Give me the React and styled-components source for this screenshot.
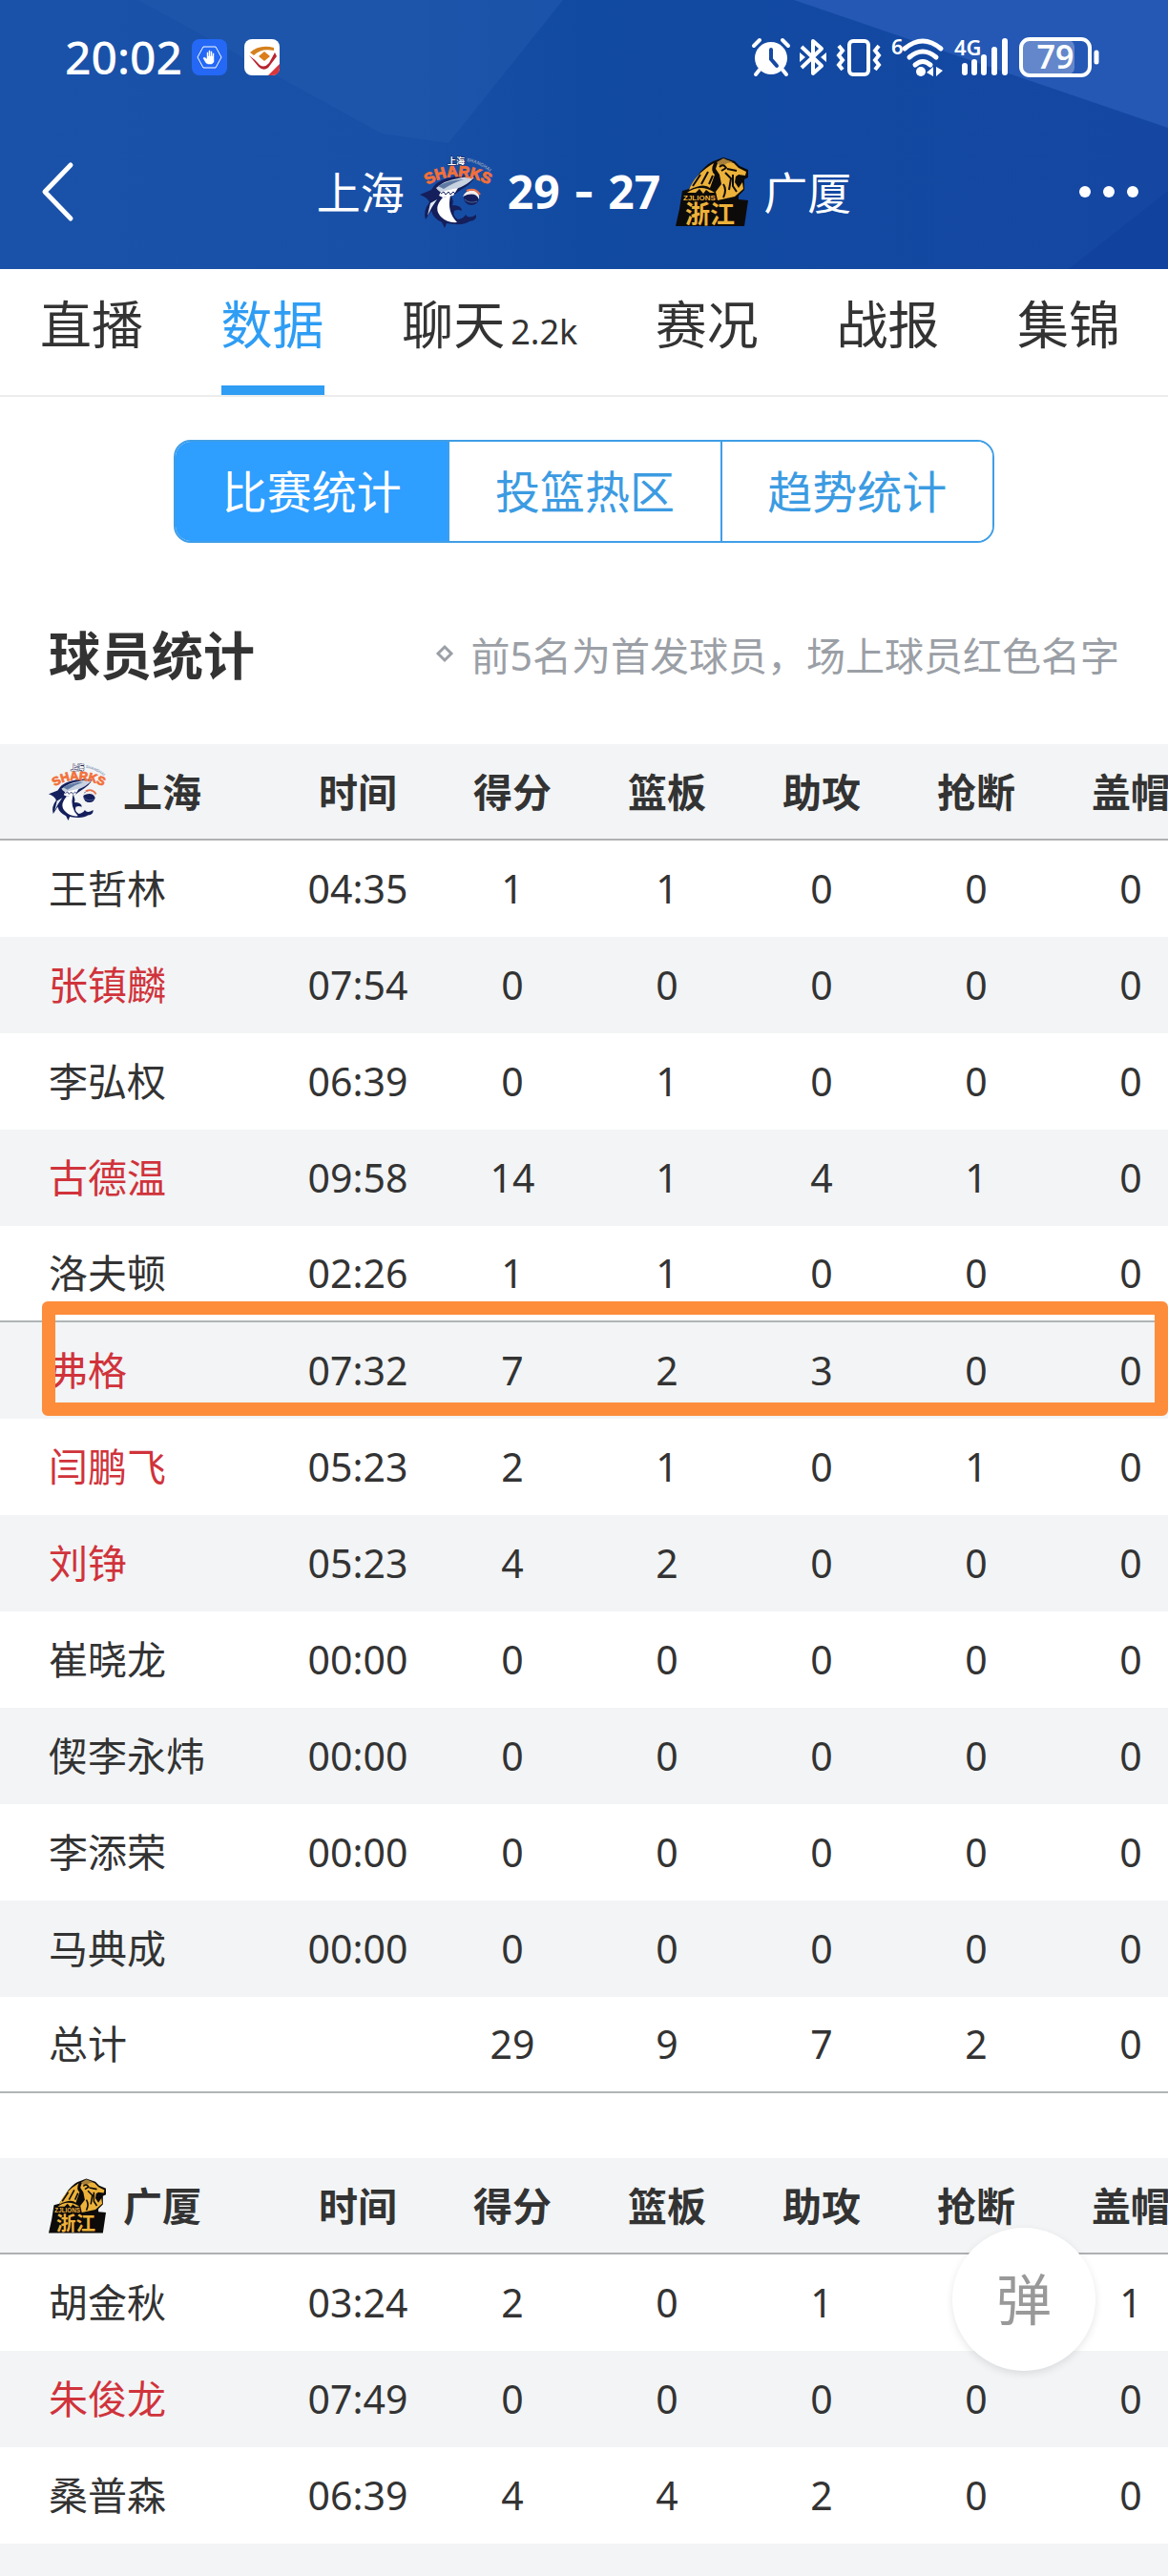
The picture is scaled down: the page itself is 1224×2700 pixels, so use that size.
import React, { useState } from "react";
import styled, { createGlobalStyle } from "styled-components";

const tabs = [
  { name: "直播" },
  { name: "数据" },
  { name: "聊天", count: "2.2k" },
  { name: "赛况" },
  { name: "战报" },
  { name: "集锦" },
];

const segments = ["比赛统计", "投篮热区", "趋势统计"];

const columns = ["时间", "得分", "篮板", "助攻", "抢断", "盖帽"];

const shanghai = [
  { name: "王哲林", stats: ["04:35", 1, 1, 0, 0, 0] },
  { name: "张镇麟", onCourt: true, stats: ["07:54", 0, 0, 0, 0, 0] },
  { name: "李弘权", stats: ["06:39", 0, 1, 0, 0, 0] },
  { name: "古德温", onCourt: true, stats: ["09:58", 14, 1, 4, 1, 0] },
  { name: "洛夫顿", lined: true, stats: ["02:26", 1, 1, 0, 0, 0] },
  { name: "弗格", onCourt: true, marked: true, stats: ["07:32", 7, 2, 3, 0, 0] },
  { name: "闫鹏飞", onCourt: true, stats: ["05:23", 2, 1, 0, 1, 0] },
  { name: "刘铮", onCourt: true, stats: ["05:23", 4, 2, 0, 0, 0] },
  { name: "崔晓龙", stats: ["00:00", 0, 0, 0, 0, 0] },
  { name: "偰李永炜", stats: ["00:00", 0, 0, 0, 0, 0] },
  { name: "李添荣", stats: ["00:00", 0, 0, 0, 0, 0] },
  { name: "马典成", stats: ["00:00", 0, 0, 0, 0, 0] },
  { name: "总计", lined: true, stats: ["", 29, 9, 7, 2, 0] },
];

const guangsha = [
  { name: "胡金秋", stats: ["03:24", 2, 0, 1, "", 1] },
  { name: "朱俊龙", onCourt: true, stats: ["07:49", 0, 0, 0, 0, 0] },
  { name: "桑普森", stats: ["06:39", 4, 4, 2, 0, 0] },
  { name: "", stats: ["", "", "", "", "", ""] },
];

const SharksLogo = ({ size }) => (
  <svg width={size} height={size} viewBox="0 0 76 76" role="img" aria-label="上海">
    <path id="sharksArc" d="M8 31 Q36 13 74 31" fill="none" />
    <path id="sharksTop" d="M49 6 Q62 8 73 17" fill="none" />
    <path
      d="M0 41 L12 36 Q17 27 28 24 Q44 19 58 22 Q54 30 43 36 L33 43 Q36 48 34 52 Q44 52 44 58 Q40 56 36 58 Q34 64 40 67 Q46 66 48 62 Q51 67 59 62 Q60 68 52 69 Q46 74 28 71 L26 76 L23 70 Q14 66 12 58 L6 67 Q3 58 10 49 Q8 44 0 41Z"
      fill="#141f5c"
    />
    <path
      d="M17 34 Q26 26 40 24 Q50 21 57 23 Q50 31 38 35 L27 39 Q21 40 17 34Z"
      fill="#c8d2e0"
    />
    <path d="M19 32 Q32 25 46 25 Q36 28 25 35Z" fill="#5f7aa3" />
    <path d="M22 38 L40 34 L35 42 L24 44 L20 42Z" fill="#fff" />
    <path
      d="M22 40 l3 -2 l2 3 l3 -3 l2 3 l3 -3 l2 2"
      fill="none"
      stroke="#141f5c"
      strokeWidth="1"
    />
    <path d="M24 44 Q13 56 23 65 Q29 71 39 70 Q28 59 32 42Z" fill="#fff" />
    <path d="M11 50 L18 46 Q12 54 8 63Z" fill="#e4eaf3" />
    <circle cx="54" cy="44" r="8" fill="#141f5c" />
    <path d="M45 43 Q49 35 58 37 Q63 40 62 46 Q58 37 45 43Z" fill="#f3efee" />
    <path d="M49 37 Q58 33 63 41" fill="none" stroke="#ee7047" strokeWidth="2" />
    <path d="M47 46 Q52 51 60 48" fill="none" stroke="#4d6297" strokeWidth="1" />
    <g fontFamily="'Liberation Sans', sans-serif" fontWeight="bold">
      <text fontSize="16" fill="#f2703a" stroke="#f2703a" strokeWidth="1">
        <textPath href="#sharksArc">SHARKS</textPath>
      </text>
      <text fontSize="5" fill="#8f9dbb">
        <textPath href="#sharksTop">SHANGHAI</textPath>
      </text>
    </g>
    <text
      x="29"
      y="9"
      fontSize="9"
      fontWeight="bold"
      fill="#fff"
      stroke="#1a2350"
      strokeWidth="1"
      paintOrder="stroke"
      fontFamily="'Noto Sans CJK SC', sans-serif"
    >
      上海
    </text>
  </svg>
);

const LionsLogo = ({ size }) => (
  <svg width={size} height={size} viewBox="0 0 76 76" role="img" aria-label="广厦">
    <path
      d="M26 17 Q36 6 42 5 L50 2 L62 6 L67 11 L76 15 L76 23 L72 25 L72 36 L66 42 L66 46 L76 47 L72 74 L0 74 L4 56 L7 37 L14 35Z"
      fill="#0d0b0a"
    />
    <path d="M14 36 Q20 20 40 8 Q36 16 41 20 L36 34 Q30 28 14 36Z" fill="#edb23a" />
    <path
      d="M44 8 L50 4 L61 8 L66 13 L74 17 L73 21 L66 20 L63 22 L62 28 L66 34 L70 28 L71 35 L62 43 L44 47 L42 38 L48 30 L46 20 L42 14Z"
      fill="#edb23a"
    />
    <path d="M43 7 L50 3 L60 7 L54 8 L48 12Z" fill="#a8803a" />
    <path
      d="M46 12 Q50 8 53 13 L48 16 M54 14 L64 16 M52 18 L58 24 L56 36 M50 30 Q54 36 50 44 M60 20 L60 32 L64 38 M18 32 L26 20 M27 30 L34 17 M35 30 L39 21"
      fill="none"
      stroke="#0d0b0a"
      strokeWidth="2"
    />
    <path
      d="M12 39 Q26 29 41 39 L36 39 L32 36 L29 40 L25 35 L21 39Z"
      fill="#edb23a"
    />
    <g fill="#edb23a" fontWeight="bold">
      <text x="8" y="47" fontSize="8" fontFamily="'Liberation Sans', sans-serif">
        ZJLIONS
      </text>
      <text x="10" y="71" fontSize="26" fontFamily="'Noto Sans CJK SC', sans-serif">
        浙江
      </text>
    </g>
  </svg>
);

const HeaderArt = () => (
  <Backdrop viewBox="0 0 1224 282" preserveAspectRatio="none" aria-hidden="true">
    <defs>
      <linearGradient id="headerBase">
        <stop offset="0" stopColor="#1b52a9" />
        <stop offset="0.35" stopColor="#1950a7" />
        <stop offset="0.5" stopColor="#114aa1" />
        <stop offset="1" stopColor="#1547a2" />
      </linearGradient>
    </defs>
    <rect width="1224" height="282" fill="url(#headerBase)" />
    <path d="M145 0 H590 L470 150 L400 140Z" fill="#1f58ae" opacity="0.6" />
    <path d="M832 0 L1224 134 V0Z" fill="#2458b4" />
    <path d="M1224 200 L1120 282 H1224Z" fill="#0f409c" opacity="0.7" />
  </Backdrop>
);

const StatusIcons = () => (
  <Status>
    {/* alarm */}
    <svg width="40" height="40" viewBox="0 0 40 40" fill="#fff">
      <circle cx="20" cy="21" r="17" />
      <path
        d="M2 8 L8 2 M38 8 L32 2 M8 33 L4 38 M32 33 L36 38"
        stroke="#fff"
        strokeWidth="4"
        strokeLinecap="round"
      />
      <path
        d="M20 12 V22 L26 29"
        fill="none"
        stroke="#1549a3"
        strokeWidth="4"
        strokeLinecap="round"
      />
    </svg>
    {/* bluetooth */}
    <svg width="28" height="40" viewBox="0 0 28 40" fill="none" stroke="#fff" strokeWidth="4">
      <path d="M2 9 L23 29 L14 37 V3 L23 11 L2 31" strokeLinejoin="round" />
      <path d="M0 15 L6 20 L0 25Z M28 15 L22 20 L28 25Z" fill="#fff" stroke="none" />
    </svg>
    {/* vibrate */}
    <svg width="48" height="40" viewBox="0 0 48 40" fill="none" stroke="#fff" strokeWidth="4">
      <rect x="14" y="3" width="20" height="35" rx="4" />
      <path
        d="M3 8 L7 13 L3 18 L7 23 L3 28 L7 33 M45 8 L41 13 L45 18 L41 23 L45 28 L41 33"
        strokeWidth="4"
      />
    </svg>
    {/* wifi */}
    <svg width="56" height="42" viewBox="0 0 56 42" fill="none" stroke="#fff">
      <text x="0" y="18" fontSize="22" fontWeight="600" fill="#fff" stroke="none">
        6
      </text>
      <path
        d="M14 12 Q33 -4 52 12 M19 21 Q33 9 47 21 M25 29 Q33 22 41 29"
        strokeWidth="5"
        strokeLinecap="round"
      />
      <circle cx="31" cy="36" r="5" fill="#fff" stroke="none" />
      <path d="M44 31 V41 L37 37Z M47 31 L54 35 L47 41Z" fill="#fff" stroke="none" />
    </svg>
    {/* mobile signal */}
    <svg width="58" height="42" viewBox="0 0 58 42" stroke="#fff" fill="#fff">
      <text x="0" y="19" fontSize="22" fontWeight="600" stroke="none">
        4G
      </text>
      <path
        d="M11 30 V37 M21 26 V37 M31 21 V37 M42 13 V37 M53 4 V37"
        strokeWidth="6"
        strokeLinecap="round"
      />
    </svg>
    {/* battery */}
    <svg width="84" height="42" viewBox="0 0 84 42">
      <rect x="4" y="3" width="54" height="36" rx="7" fill="#7f9bd3" opacity="0.7" />
      <rect
        x="2"
        y="2"
        width="72"
        height="38"
        rx="9"
        fill="none"
        stroke="#fff"
        strokeWidth="4"
      />
      <path d="M81 16 V26" stroke="#fff" strokeWidth="5" strokeLinecap="round" />
      <text x="38" y="33" fontSize="34" fontWeight="600" textAnchor="middle" fill="#fff">
        79
      </text>
    </svg>
  </Status>
);

const TeamTable = ({ team, logo, players }) => (
  <TableScroller>
    <Table>
      <colgroup>
        <col />
        {columns.map((column) => (
          <StatCol key={column} />
        ))}
      </colgroup>
      <thead>
        <tr>
          <HeadCell scope="col" $first>
            <TeamName>
              {logo}
              {team}
            </TeamName>
          </HeadCell>
          {columns.map((column) => (
            <HeadCell scope="col" key={column}>
              {column}
            </HeadCell>
          ))}
        </tr>
      </thead>
      <tbody>
        {players.map((player, index) => (
          <PlayerRow key={index} $lined={player.lined}>
            <PlayerName scope="row" $onCourt={player.onCourt}>
              {player.name}
              {player.marked && <Marker />}
            </PlayerName>
            {player.stats.map((value, i) => (
              <Cell key={i}>{value}</Cell>
            ))}
          </PlayerRow>
        ))}
      </tbody>
    </Table>
  </TableScroller>
);

const App = () => {
  const [activeTab, setActiveTab] = useState("数据");
  const [activeSegment, setActiveSegment] = useState("比赛统计");

  return (
    <Screen>
      <GlobalStyle />
      <Header>
        <HeaderArt />
        <StatusBar>
          <Clock>20:02</Clock>
          <AppIcons>
            <svg width="37" height="38" viewBox="0 0 37 38">
              <rect width="37" height="38" rx="8" fill="#2468f5" />
              <path
                d="M12 8 H25 L31 19 L25 30 H12 L6 19Z"
                fill="none"
                stroke="#fff"
                strokeWidth="1"
              />
              <path
                d="M15 25 L12 20 L13 19 L16 21 V14 H17 V18 H18 V12 H19 V18 H20 V13 H21 V18 H22 V15 H23 V24 L21 26 H17Z"
                fill="#fff"
                stroke="#fff"
                strokeWidth="0.5"
              />
            </svg>
            <svg width="37" height="38" viewBox="0 0 37 38">
              <rect width="37" height="38" rx="8" fill="#fff" />
              <path d="M37 26 V30 Q37 38 29 38 H25Z" fill="#d9363c" />
              <path d="M6 14 Q16 5 31 9 L31 12 Q18 9 10 17Z" fill="#d4801f" />
              <path d="M21 13 L27 18 L21 23 L15 18Z" fill="#dc7d1c" />
              <path
                d="M5 17 Q12 22 16 27 Q21 31 26 25 L32 14 L34 18 L25 30 Q20 34 15 29Z"
                fill="#b92430"
              />
            </svg>
          </AppIcons>
          <StatusIcons />
        </StatusBar>
        <TitleBar>
          <IconButton aria-label="返回">
            <svg width="52" height="64" viewBox="0 0 52 64">
              <path
                d="M44 4 L17 32 L44 60"
                fill="none"
                stroke="#fff"
                strokeWidth="5"
                strokeLinecap="round"
                strokeLinejoin="round"
              />
            </svg>
          </IconButton>
          <Match>
            <span>上海</span>
            <SharksLogo size={76} />
            <Score>
              29<Dash>-</Dash>27
            </Score>
            <LionsLogo size={76} />
            <span>广厦</span>
          </Match>
          <IconButton aria-label="更多" $right>
            <svg width="64" height="14" viewBox="0 0 64 14" fill="#fff">
              <circle cx="7" cy="7" r="6" />
              <circle cx="32" cy="7" r="6" />
              <circle cx="57" cy="7" r="6" />
            </svg>
          </IconButton>
        </TitleBar>
      </Header>

      <TabBar>
        {tabs.map((tab) => (
          <TabButton
            key={tab.name}
            $active={activeTab === tab.name}
            onClick={() => setActiveTab(tab.name)}
          >
            {tab.name}
            {tab.count && <TabCount>{tab.count}</TabCount>}
          </TabButton>
        ))}
      </TabBar>

      <SegmentGroup>
        {segments.map((segment) => (
          <SegmentButton
            key={segment}
            $active={activeSegment === segment}
            onClick={() => setActiveSegment(segment)}
          >
            {segment}
          </SegmentButton>
        ))}
      </SegmentGroup>

      <SectionHeader>
        <h2>球员统计</h2>
        <Note>
          <svg width="20" height="20" viewBox="0 0 20 20">
            <path d="M10 3 L17 10 L10 17 L3 10Z" fill="none" stroke="#9b9fa6" strokeWidth="3" />
          </svg>
          前5名为首发球员，场上球员红色名字
        </Note>
      </SectionHeader>

      <Tables>
        <TeamTable team="上海" logo={<SharksLogo size={60} />} players={shanghai} />
        <TeamTable team="广厦" logo={<LionsLogo size={60} />} players={guangsha} />
      </Tables>

      <BarrageButton>弹</BarrageButton>
    </Screen>
  );
};

const GlobalStyle = createGlobalStyle`
  * {
    box-sizing: border-box;
  }

  body {
    margin: 0;
    background-color: #fff;
    color: #333;
    font-family: "Noto Sans", "Noto Sans CJK SC", sans-serif;
  }

  button {
    padding: 0;
    border: none;
    background: none;
    color: inherit;
    font-family: inherit;
    cursor: pointer;
  }

  svg {
    display: block;
    flex-shrink: 0;
    overflow: visible;
  }
`;

const Screen = styled.div`
  height: 100vh;
  overflow: hidden;
`;

const Header = styled.header`
  position: relative;
  color: #fff;
`;

const Backdrop = styled.svg`
  position: absolute;
  inset: 0;
  width: 100%;
  height: 100%;
  z-index: -1;
`;

const StatusBar = styled.div`
  display: flex;
  align-items: center;
  height: 120px;
  padding: 0 72px 0 68px;
`;

const Clock = styled.span`
  font-size: 48px;
  font-weight: 500;
  line-height: 56px;
`;

const AppIcons = styled.div`
  display: flex;
  gap: 18px;
  margin-left: 10px;
`;

const Status = styled.div`
  display: flex;
  align-items: center;
  gap: 10px;
  margin-left: auto;
`;

const TitleBar = styled.div`
  display: grid;
  grid-template-columns: 1fr auto 1fr;
  align-items: center;
  height: 162px;
  padding: 0 30px;
`;

const IconButton = styled.button`
  justify-self: ${(props) => (props.$right ? "end" : "start")};
`;

const Match = styled.div`
  display: flex;
  align-items: center;
  gap: 16px;
  font-size: 46px;
  line-height: 56px;
`;

const Score = styled.strong`
  display: flex;
  align-items: center;
  gap: 14px;
  font-size: 48px;
`;

const Dash = styled.span`
  font-family: Inter, sans-serif;
`;

const TabBar = styled.nav`
  display: flex;
  justify-content: space-between;
  height: 134px;
  padding: 0 50px 0 42px;
  border-bottom: 2px solid #ececec;
`;

const TabButton = styled.button`
  display: flex;
  align-items: baseline;
  padding-top: 20px;
  border-bottom: 10px solid ${(props) => (props.$active ? "#2f9df4" : "transparent")};
  color: ${(props) => (props.$active ? "#2f9df4" : "#333")};
  font-size: 54px;
  line-height: 76px;
`;

const TabCount = styled.span`
  margin-left: 6px;
  font-size: 36px;
`;

const SegmentGroup = styled.div`
  display: grid;
  grid-template-columns: repeat(3, 1fr);
  width: 860px;
  max-width: 100%;
  height: 108px;
  margin: 45px auto 0;
  border: 2px solid #3f9ee6;
  border-radius: 18px;
  overflow: hidden;
`;

const SegmentButton = styled.button`
  padding-bottom: 6px;
  background-color: ${(props) => (props.$active ? "#2e9eff" : "#fff")};
  color: ${(props) => (props.$active ? "#fff" : "#3c9be2")};
  font-size: 47px;

  & + & {
    border-left: 2px solid #3f9ee6;
  }
`;

const SectionHeader = styled.div`
  display: flex;
  justify-content: space-between;
  align-items: center;
  height: 211px;
  padding: 20px 51px 0;

  h2 {
    margin: 0;
    font-size: 54px;
    font-weight: bold;
  }
`;

const Note = styled.p`
  display: flex;
  align-items: center;
  gap: 18px;
  margin: 0;
  color: #9b9fa6;
  font-size: 41px;
`;

const Tables = styled.div`
  display: flex;
  flex-direction: column;
  gap: 68px;
`;

const TableScroller = styled.div`
  overflow-x: auto;
  scrollbar-width: none;
`;

const Table = styled.table`
  width: 100%;
  min-width: 1266px;
  table-layout: fixed;
  border-spacing: 0;
  font-size: 41px;
  line-height: 56px;
  text-align: center;
`;

const StatCol = styled.col`
  width: 162px;
`;

const HeadCell = styled.th`
  height: 101px;
  padding: ${(props) => (props.$first ? "0 0 0 51px" : "0")};
  border-bottom: 2px solid #aeb0b2;
  background-color: #f2f4f5;
  font-weight: bold;
`;

const TeamName = styled.div`
  display: flex;
  align-items: center;
  gap: 18px;
`;

const Cell = styled.td`
  height: 101px;
  padding: 0 0 2px;
`;

const PlayerName = styled.th`
  padding: 0 0 2px 51px;
  color: ${(props) => (props.$onCourt ? "#d0333b" : "inherit")};
  font-weight: normal;
  text-align: left;
`;

const PlayerRow = styled.tr`
  position: relative;

  &:nth-child(even) {
    background-color: #f2f4f5;
  }

  th,
  td {
    border-bottom: ${(props) => (props.$lined ? "2px solid #b0b5b5" : "none")};
  }
`;

// orange frame over the marked player's row
const Marker = styled.span`
  position: absolute;
  top: -22px;
  bottom: 3px;
  left: 44px;
  right: 42px;
  border: 14px solid #fd8d3b;
  border-radius: 6px;
`;

const BarrageButton = styled.button`
  && {
    position: fixed;
    right: 76px;
    bottom: 215px;
    width: 150px;
    height: 150px;
    padding-bottom: 6px;
    border-radius: 50%;
    background-color: #fff;
    box-shadow: 0 3px 8px rgba(0, 0, 0, 0.1);
    color: #999;
    font-size: 58px;
  }
`;

export default App;
